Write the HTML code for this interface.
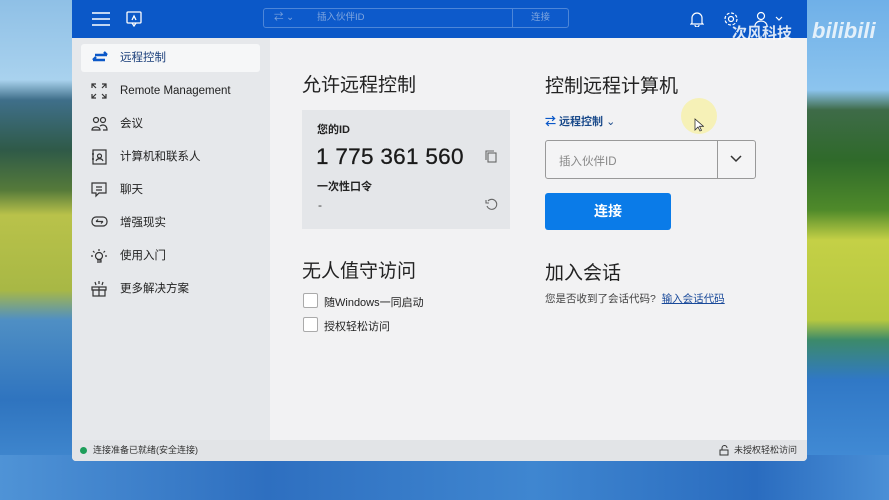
<!DOCTYPE html>
<html><head><meta charset="utf-8"><style>
*{margin:0;padding:0;box-sizing:border-box}
body{width:889px;height:500px;overflow:hidden;position:relative;font-family:"Liberation Sans","Noto Sans CJK SC",sans-serif;background:#3d86c9}
.bgl{position:absolute;left:0;top:0;width:80px;height:500px;background:linear-gradient(#8fc0e6 0,#a9d2ee 80px,#3f6f8a 100px,#2f5a48 150px,#557a3a 190px,#b9c24a 215px,#a8b845 290px,#4f8fc4 320px,#2f74bf 400px,#4a93d8 500px)}
.bgr{position:absolute;right:0;top:0;width:90px;height:500px;background:linear-gradient(#6fb0e8 0,#8cc4ee 90px,#3e6b48 110px,#2f6a2a 160px,#4f8a2a 210px,#c4d046 240px,#b6c840 320px,#3c8a6a 340px,#3078c6 380px,#4a94dc 500px)}
.bgb{position:absolute;left:0;top:455px;width:889px;height:45px;background:linear-gradient(90deg,#4f93d6,#2e6fc0 30%,#3f86d0 60%,#2a6cbf 85%,#4a8fd6)}
.win{position:absolute;left:72px;top:0;width:735px;height:461px;background:#f2f2f3;overflow:hidden;border-radius:0 0 4px 4px}
.hdr{position:absolute;left:0;top:0;width:735px;height:38px;background:#0b58c8}
.side{position:absolute;left:0;top:38px;width:198px;height:402px;background:#e6e8eb}
.item{position:absolute;left:9px;width:179px;height:28px;font-size:11.5px;color:#222;line-height:28px;padding-left:39px}
.item svg{position:absolute;left:10px;top:6px}
.sel{background:#f6f7f8;border-radius:3px}
.status{position:absolute;left:0;top:440px;width:735px;height:21px;background:#e2e4e7;font-size:9px;color:#333;line-height:21px}
h2{position:absolute;font-weight:normal;font-size:19px;color:#222}
.card{position:absolute;left:230px;top:110px;width:208px;height:119px;background:#e4e6e9}
.btn{position:absolute;left:473px;top:193px;width:126px;height:37px;background:#0a7be8;border-radius:3px;color:#fff;font-weight:bold;font-size:14px;text-align:center;line-height:37px}
.cb{position:absolute;width:15px;height:15px;border:1px solid #aaa;background:#fff;border-radius:2px}
</style></head><body>
<div class="bgl"></div><div class="bgr"></div><div class="bgb"></div>
<div class="win">
 <div class="hdr">
  <svg style="position:absolute;left:20px;top:12px" width="18" height="14"><path d="M0 1h18M0 7h18M0 13h18" stroke="#fff" stroke-width="1.6"/></svg>
  <svg style="position:absolute;left:54px;top:11px" width="16" height="16" fill="none" stroke="#fff" stroke-width="1.3"><rect x="1" y="1" width="14" height="11" rx="1"/><path d="M6 12l2 3 2-3M6 9l2-4 2 4"/></svg>
  <div style="position:absolute;left:191px;top:8px;width:306px;height:20px;border:1px solid #4d86d8;border-radius:3px;background:#0d5acb;font-size:9.5px;color:#7fa6df;line-height:18px">
   <span style="position:absolute;left:10px">⇄ ⌄</span><span style="position:absolute;left:53px">插入伙伴ID</span>
   <span style="position:absolute;right:0;top:0;width:56px;text-align:center;border-left:1px solid #4d86d8">连接</span>
  </div>
  <svg style="position:absolute;left:618px;top:11px" width="14" height="16" fill="none" stroke="#fff" stroke-width="1.2"><path d="M2 12V7a5 5 0 0110 0v5l1 1H1zM5 14a2 2 0 004 0"/></svg>
  <svg style="position:absolute;left:651px;top:11px" width="16" height="16" fill="none" stroke="#fff" stroke-width="1.2"><circle cx="8" cy="8" r="2.5"/><circle cx="8" cy="8" r="6" stroke-dasharray="3 1.7"/></svg>
  <svg style="position:absolute;left:682px;top:11px" width="30" height="16" fill="none" stroke="#fff" stroke-width="1.2"><circle cx="7" cy="5" r="3.5"/><path d="M1 15a6 5 0 0112 0M22 6l3 3 3-3"/></svg>
 </div>
 <div class="side">
  <div class="item sel" style="top:6px;color:#1a3e7a"><svg width="18" height="16"><path d="M2 10h12M2 10l3-3M16 5H4M16 5l-3-3" stroke="#0b58c8" stroke-width="2.4" fill="none"/></svg>远程控制</div>
  <div class="item" style="top:39px"><svg width="16" height="16" fill="none" stroke="#333" stroke-width="1.2"><path d="M1 5V1h4M1 1l4 4M15 5V1h-4M15 1l-4 4M1 11v4h4M1 15l4-4M15 11v4h-4M15 15l-4-4"/></svg>Remote Management</div>
  <div class="item" style="top:72px"><svg width="17" height="16" fill="none" stroke="#333" stroke-width="1.2"><circle cx="5" cy="4" r="2.5"/><circle cx="12" cy="4" r="2.5"/><path d="M1 14c0-4 8-4 8 0zM9 10c3-2 7-1 7 4h-4"/></svg>会议</div>
  <div class="item" style="top:105px"><svg width="16" height="16" fill="none" stroke="#333" stroke-width="1.2"><rect x="2" y="1" width="13" height="14"/><circle cx="8.5" cy="7" r="2"/><path d="M5 12c1-3 6-3 7 0M1 5h2M1 10h2"/></svg>计算机和联系人</div>
  <div class="item" style="top:138px"><svg width="16" height="16" fill="none" stroke="#333" stroke-width="1.2"><path d="M1 1h14v10H8l-3 3v-3H1zM5 5h6M5 8h6"/></svg>聊天</div>
  <div class="item" style="top:171px"><svg width="17" height="14" fill="none" stroke="#333" stroke-width="1.2"><rect x="1" y="2" width="15" height="9" rx="4"/><path d="M5 6.5h7M5 6.5l2-2M12 6.5l-2 2"/></svg>增强现实</div>
  <div class="item" style="top:204px"><svg width="16" height="16" fill="none" stroke="#333" stroke-width="1.2"><circle cx="8" cy="8" r="3.5"/><path d="M6 12h4v2H6M8 1v2M2 3l1.5 1.5M14 3l-1.5 1.5M0 8h2M14 8h2"/></svg>使用入门</div>
  <div class="item" style="top:237px"><svg width="16" height="16" fill="none" stroke="#333" stroke-width="1.2"><rect x="1" y="6" width="14" height="3"/><rect x="2" y="9" width="12" height="6"/><path d="M8 6v9M4 1l1 3M8 0v3M12 1l-1 3"/></svg>更多解决方案</div>
 </div>
 <h2 style="left:230px;top:70px">允许远程控制</h2>
 <div class="card">
  <div style="position:absolute;left:15px;top:11px;font-size:11px;font-weight:bold;color:#222">您的ID</div>
  <div style="position:absolute;left:14px;top:34px;font-size:22.5px;color:#1a1a1a;letter-spacing:.3px;-webkit-text-stroke:.3px #1a1a1a">1 775 361 560</div>
  <svg style="position:absolute;left:183px;top:40px" width="12" height="13" fill="none" stroke="#666" stroke-width="1.1"><rect x="3" y="3" width="8" height="9"/><path d="M1 10V1h8"/></svg>
  <div style="position:absolute;left:15px;top:68px;font-size:11px;font-weight:bold;color:#222">一次性口令</div>
  <div style="position:absolute;left:16px;top:88px;font-size:12px;color:#444">-</div>
  <svg style="position:absolute;left:183px;top:88px" width="13" height="13" fill="none" stroke="#666" stroke-width="1.1"><path d="M3 3a5 5 0 11-1 5M1 2v3h3"/></svg>
 </div>
 <h2 style="left:230px;top:256px">无人值守访问</h2>
 <div class="cb" style="left:231px;top:293px"></div><div style="position:absolute;left:252px;top:294px;font-size:11px;color:#222">随Windows一同启动</div>
 <div class="cb" style="left:231px;top:317px"></div><div style="position:absolute;left:252px;top:318px;font-size:11px;color:#222">授权轻松访问</div>
 <h2 style="left:473px;top:71px">控制远程计算机</h2>
 <div style="position:absolute;left:473px;top:113px;font-size:11px;font-weight:bold;color:#1a4a8a"><span style="color:#0b58c8">⇄</span> 远程控制 <span style="font-weight:normal">⌄</span></div>
 <div style="position:absolute;left:609px;top:98px;width:36px;height:36px;border-radius:50%;background:#f6f0a8;opacity:.8"></div>
 <svg style="position:absolute;left:622px;top:118px" width="10" height="14"><path d="M1 1v11l3-3 2 4 1.5-.7-2-4h4z" fill="#fff" stroke="#333" stroke-width=".8"/></svg>
 <div style="position:absolute;left:473px;top:140px;width:211px;height:39px;border:1px solid #999;border-radius:3px;background:#f4f4f5">
  <span style="position:absolute;left:13px;top:12px;font-size:11.5px;color:#888">插入伙伴ID</span>
  <div style="position:absolute;left:171px;top:0;width:1px;height:37px;background:#999"></div>
  <svg style="position:absolute;left:184px;top:13px" width="12" height="10"><path d="M1 2l5 5 5-5" stroke="#333" stroke-width="1.5" fill="none"/></svg>
 </div>
 <div class="btn">连接</div>
 <h2 style="left:473px;top:258px">加入会话</h2>
 <div style="position:absolute;left:473px;top:291px;font-size:10.5px;color:#444">您是否收到了会话代码? &nbsp;<span style="color:#1a4a9a;text-decoration:underline">输入会话代码</span></div>
 <div class="status">
  <span style="position:absolute;left:8px;top:7px;width:7px;height:7px;border-radius:50%;background:#1e9e5a"></span>
  <span style="position:absolute;left:21px">连接准备已就绪(安全连接)</span>
  <svg style="position:absolute;left:647px;top:5px" width="10" height="11" fill="none" stroke="#333" stroke-width="1"><rect x="1" y="5" width="8" height="5"/><path d="M3 5V3a2.5 2.5 0 015 0"/></svg>
  <span style="position:absolute;left:662px">未授权轻松访问</span>
 </div>
</div>
<div style="position:absolute;left:732px;top:22px;font-size:15px;color:#fff;font-weight:bold;opacity:.85;z-index:5">次风科技</div>
<div style="position:absolute;left:812px;top:18px;font-size:22px;color:#fff;font-weight:bold;opacity:.8;font-style:italic;z-index:5">bilibili</div>
</body></html>
